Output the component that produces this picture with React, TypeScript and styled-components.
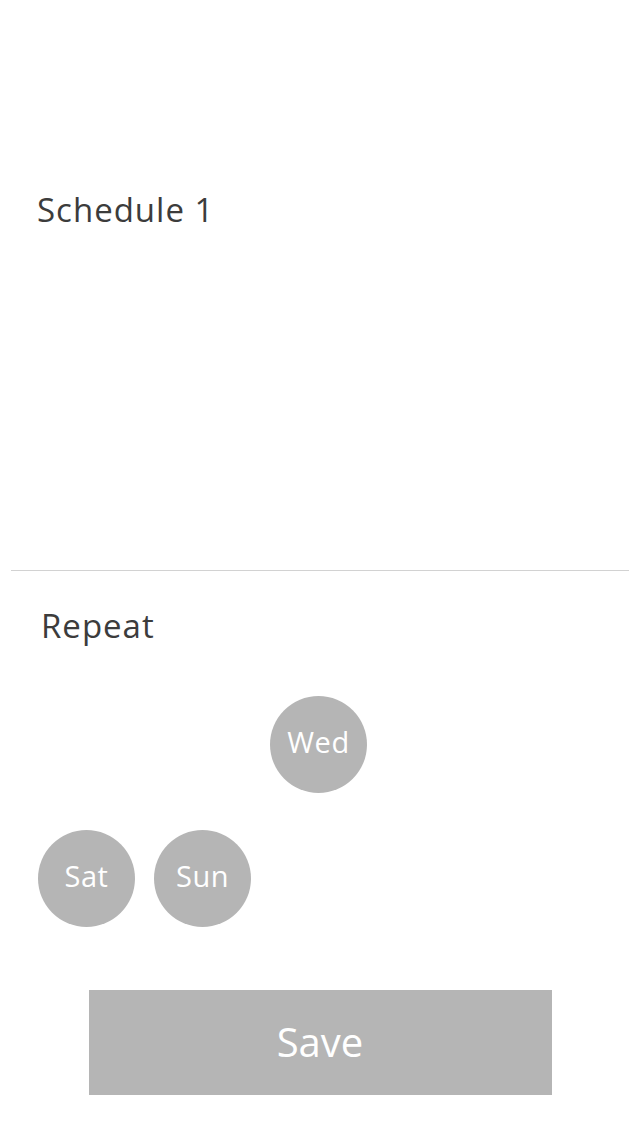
import { FC } from 'react'
import styled, { createGlobalStyle } from 'styled-components'

const GlobalStyle = createGlobalStyle`
  html, body {
    margin: 0;
    padding: 0;
    background: #ffffff;
  }
  body {
    font-family: 'Open Sans', 'Noto Sans', sans-serif;
  }
`

interface Day {
  label: string
  selected: boolean
}

const days: Day[] = [
  { label: 'Mon', selected: false },
  { label: 'Tue', selected: false },
  { label: 'Wed', selected: true },
  { label: 'Thu', selected: false },
  { label: 'Fri', selected: false },
  { label: 'Sat', selected: true },
  { label: 'Sun', selected: true },
]

const App: FC = () => {
  return (
    <Page>
      <GlobalStyle />
      <Header>
        <Title>Schedule 1</Title>
      </Header>

      <Divider />

      <RepeatSection>
        <SectionLabel>Repeat</SectionLabel>
        <DayGrid>
          {days.map((day) => (
            <DayButton key={day.label} selected={day.selected}>
              {day.label}
            </DayButton>
          ))}
        </DayGrid>
      </RepeatSection>

      <Footer>
        <SaveButton>Save</SaveButton>
      </Footer>
    </Page>
  )
}

export default App

const Page = styled.div`
  width: 640px;
  height: 1136px;
  display: flex;
  flex-direction: column;
  background: #ffffff;
  overflow: hidden;
`

const Header = styled.div`
  height: 570px;
  padding: 187px 0 0 37px;
  box-sizing: border-box;
`

const Title = styled.div`
  color: #3c3c3c;
  font-size: 33px;
  line-height: 46px;
  letter-spacing: 1px;
`

const Divider = styled.div`
  height: 1px;
  margin: 0 11px;
  background: #d2d2d2;
`

const RepeatSection = styled.div`
  display: flex;
  flex-direction: column;
  padding: 32px 0 0 38px;
`

const SectionLabel = styled.div`
  color: #3c3c3c;
  font-size: 33px;
  line-height: 46px;
  letter-spacing: 1px;
  padding-left: 3px;
`

const DayGrid = styled.div`
  display: grid;
  grid-template-columns: repeat(5, 97px);
  column-gap: 19px;
  row-gap: 37px;
  margin-top: 47px;
`

const DayButton = styled.button<{ selected: boolean }>`
  width: 97px;
  height: 97px;
  border-radius: 50%;
  border: none;
  padding: 0 0 7px;
  display: flex;
  align-items: center;
  justify-content: center;
  background: ${({ selected }) => (selected ? '#b5b5b5' : 'transparent')};
  color: #ffffff;
  font-family: 'Open Sans', 'Noto Sans', sans-serif;
  font-size: 29px;
  letter-spacing: 0.5px;
`

const Footer = styled.div`
  display: flex;
  justify-content: center;
  margin-top: 63px;
`

const SaveButton = styled.button`
  width: 463px;
  height: 105px;
  border: none;
  padding: 0 0 2px;
  background: #b5b5b5;
  color: #ffffff;
  font-family: 'Open Sans', 'Noto Sans', sans-serif;
  font-size: 40px;
  letter-spacing: 0;
`
